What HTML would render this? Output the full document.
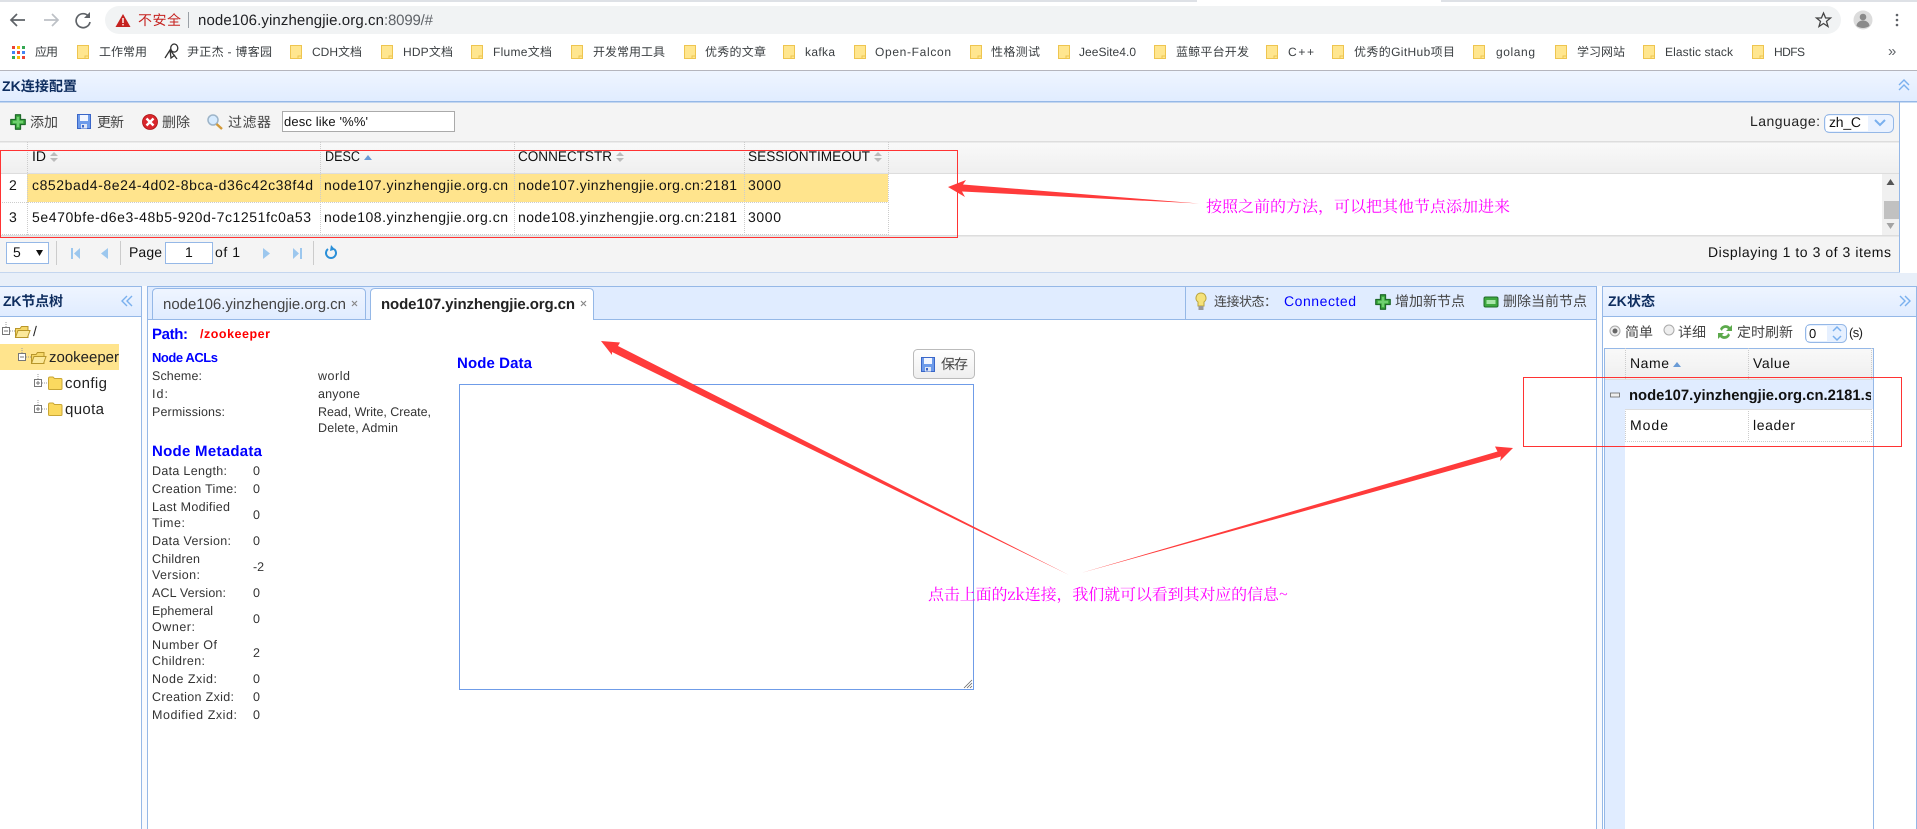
<!DOCTYPE html>
<html lang="zh"><head><meta charset="utf-8"><title>ZK</title>
<style>
html,body{margin:0;padding:0;background:#fff;width:1917px;height:829px;overflow:hidden}
svg{display:block;font-family:"Liberation Sans","Noto Sans CJK SC",sans-serif;font-size:12px}
.b{font-size:12px;fill:#3c4043}
.g{font-size:14px;fill:#111}
.m{font-size:12.5px;fill:#333}
.t{font-size:14px;fill:#444}
.bl{fill:#00f;font-weight:bold}
.ti{font-size:14px;font-weight:bold;fill:#0e2d5f}
.p{font-family:"Noto Serif CJK SC","Liberation Serif",serif;font-size:16px;fill:#f0f}
.c{fill:none;stroke:#7ab0ee;stroke-width:1.4}
</style></head><body>
<svg xmlns="http://www.w3.org/2000/svg" width="1917" height="829" viewBox="0 0 1917 829" text-rendering="geometricPrecision">
<defs>
<linearGradient id="hd" x1="0" y1="0" x2="0" y2="1"><stop offset="0" stop-color="#eff5ff"/><stop offset="1" stop-color="#e0ecff"/></linearGradient>
<linearGradient id="gh" x1="0" y1="0" x2="0" y2="1"><stop offset="0" stop-color="#f9f9f9"/><stop offset="1" stop-color="#efefef"/></linearGradient>
<linearGradient id="tb" x1="0" y1="0" x2="0" y2="1"><stop offset="0" stop-color="#eff5ff"/><stop offset="1" stop-color="#e0ecff"/></linearGradient>
<linearGradient id="sv" x1="0" y1="0" x2="0" y2="1"><stop offset="0" stop-color="#fff"/><stop offset="1" stop-color="#eee"/></linearGradient>
<g id="bm"><path d="M.5 .5H11.5V13.5H.5Z" fill="#ffe68f" stroke="#eec550"/><path d="M8 13.5V11H11.5" fill="none" stroke="#eec550"/></g>
<g id="plus"><path d="M5.5 .8H10.5V5.5H15.2V10.5H10.5V15.2H5.5V10.5H.8V5.5H5.5Z" fill="#3fae3f" stroke="#1f6b2a" stroke-width="1.3" stroke-linejoin="round"/><path d="M6.8 3H9.2V6.8H13V9.2H9.2V13H6.8V9.2H3V6.8H6.8Z" fill="#6fd06f"/></g>
<g id="flop"><rect x=".5" y=".5" width="13" height="14" fill="#6d9bea" stroke="#3a66c8"/><rect x="3" y="1" width="8" height="6" fill="#f2f6ff"/><rect x="4" y="10" width="6" height="4.5" fill="#dfe6f5"/><rect x="5" y="11" width="2" height="2.5" fill="#3a66c8"/></g>
<g id="fc"><path d="M.5 3.5H5L6.500 1.500H13V12.500H.5Z" fill="#f5d768" stroke="#b8962a"/><path d="M.5 12.500L3 5.500H15L12.500 12.500Z" fill="#fbe89a" stroke="#b8962a"/></g>
<g id="fo"><path d="M.5 2.500Q.5 1 2 1H5L6.500 2.500H13Q14 2.500 14 4V12.500Q14 13.500 13 13.500H1.500Q.5 13.500 .5 12.500Z" fill="#fbd95f" stroke="#c9a635"/></g>
<g id="sa"><path d="M0 4L4 0L8 4Z" fill="#bbb"/><path d="M0 6L4 10L8 6Z" fill="#bbb"/></g>
</defs>

<!-- browser chrome -->
<rect width="1917" height="2" fill="#dee1e6"/><rect x="1197" width="244" height="2" fill="#fff"/>
<rect x="105" y="6" width="1736" height="28" rx="14" fill="#f1f3f4"/>
<path d="M25 20H11M17 14L11 20L17 26" fill="none" stroke="#5f6368" stroke-width="1.7"/>
<path d="M44 20H58M52 14L58 20L52 26" fill="none" stroke="#bdc1c6" stroke-width="1.7"/>
<path d="M88.500 16.200A7 7 0 1 0 90 22" fill="none" stroke="#5f6368" stroke-width="1.7"/><path d="M90 12V18H84Z" fill="#5f6368"/>
<path d="M123 14L130.500 27H115.500Z" fill="#c5221f"/><rect x="122.300" y="18" width="1.400" height="5" fill="#fff"/><rect x="122.300" y="24" width="1.400" height="1.400" fill="#fff"/>
<text x="138" y="25" font-size="14" fill="#c5221f" textLength="43">不安全</text>
<rect x="188" y="12" width="1" height="16" fill="#9aa0a6"/>
<text x="198" y="25" font-size="15" fill="#202124" textLength="186">node106.yinzhengjie.org.cn</text>
<text x="384" y="25" font-size="15" fill="#5f6368" textLength="49">:8099/#</text>
<path d="M1823.500 13L1825.600 18H1830.500L1826.500 21.300L1828 26.500L1823.500 23.500L1819 26.500L1820.500 21.300L1816.500 18H1821.400Z" fill="none" stroke="#444" stroke-width="1.300"/>
<circle cx="1863" cy="20" r="9.500" fill="#dcdcdc"/><circle cx="1863" cy="17" r="3.300" fill="#8a8a8a"/><path d="M1856.500 26A6.500 5.500 0 0 1 1869.500 26Q1863 30 1856.500 26Z" fill="#8a8a8a"/>
<circle cx="1897" cy="15" r="1.300" fill="#5f6368"/><circle cx="1897" cy="20" r="1.300" fill="#5f6368"/><circle cx="1897" cy="25" r="1.300" fill="#5f6368"/>

<!-- bookmarks -->
<g>
<rect x="12" y="46" width="3" height="3" fill="#ea4335"/><rect x="17" y="46" width="3" height="3" fill="#fbbc05"/><rect x="22" y="46" width="3" height="3" fill="#34a853"/>
<rect x="12" y="51" width="3" height="3" fill="#4285f4"/><rect x="17" y="51" width="3" height="3" fill="#ea4335"/><rect x="22" y="51" width="3" height="3" fill="#4285f4"/>
<rect x="12" y="56" width="3" height="3" fill="#34a853"/><rect x="17" y="56" width="3" height="3" fill="#fbbc05"/><rect x="22" y="56" width="3" height="3" fill="#ea4335"/>
<path d="M165 58L170 50L171 58L175 55M172 45A3.500 4 0 1 1 171.900 45.100M170 50L177 59" fill="none" stroke="#333" stroke-width="1.300"/>
<use href="#bm" x="77" y="45"/><use href="#bm" x="290" y="45"/><use href="#bm" x="381" y="45"/><use href="#bm" x="471" y="45"/><use href="#bm" x="571" y="45"/><use href="#bm" x="684" y="45"/><use href="#bm" x="783" y="45"/><use href="#bm" x="854" y="45"/><use href="#bm" x="970" y="45"/><use href="#bm" x="1058" y="45"/><use href="#bm" x="1154" y="45"/><use href="#bm" x="1266" y="45"/><use href="#bm" x="1332" y="45"/><use href="#bm" x="1473" y="45"/><use href="#bm" x="1555" y="45"/><use href="#bm" x="1643" y="45"/><use href="#bm" x="1752" y="45"/>
<text class="b" x="35" y="56" textLength="23">应用</text>
<text class="b" x="99" y="56" textLength="48">工作常用</text>
<text class="b" x="187" y="56" textLength="85">尹正杰 - 博客园</text>
<text class="b" x="312" y="56" textLength="50">CDH文档</text>
<text class="b" x="403" y="56" textLength="50">HDP文档</text>
<text class="b" x="493" y="56" textLength="59">Flume文档</text>
<text class="b" x="593" y="56" textLength="72">开发常用工具</text>
<text class="b" x="705" y="56" textLength="61">优秀的文章</text>
<text class="b" x="805" y="56" textLength="30">kafka</text>
<text class="b" x="875" y="56" textLength="76">Open-Falcon</text>
<text class="b" x="991" y="56" textLength="49">性格测试</text>
<text class="b" x="1079" y="56" textLength="57">JeeSite4.0</text>
<text class="b" x="1176" y="56" textLength="73">蓝鲸平台开发</text>
<text class="b" x="1288" y="56" textLength="26">C++</text>
<text class="b" x="1354" y="56" textLength="101">优秀的GitHub项目</text>
<text class="b" x="1496" y="56" textLength="39">golang</text>
<text class="b" x="1577" y="56" textLength="48">学习网站</text>
<text class="b" x="1665" y="56" textLength="68">Elastic stack</text>
<text class="b" x="1774" y="56" textLength="31">HDFS</text>
<text x="1888" y="56" font-size="15" fill="#5f6368">»</text>
</g>
<rect y="70" width="1917" height="1" fill="#b5b5bd"/>

<!-- top panel -->
<rect y="71" width="1917" height="31" fill="url(#hd)"/>
<rect y="101" width="1917" height="1.500" fill="#95b8e7"/>
<text class="ti" x="2" y="91" textLength="75">ZK连接配置</text>
<path d="M1899 85L1904 80L1909 85M1899 90L1904 85L1909 90" class="c"/>
<rect y="102.500" width="1899" height="170" fill="#f4f4f4"/>
<rect x="1899" y="102" width="1" height="172" fill="#95b8e7"/>
<rect y="141" width="1899" height="1.500" fill="#ddd"/>

<use href="#plus" x="10" y="114"/>
<text class="t" x="30" y="127" textLength="28">添加</text>
<use href="#flop" x="77" y="114"/>
<text class="t" x="97" y="127" textLength="27">更新</text>
<circle cx="150" cy="122" r="7.500" fill="#d9262c" stroke="#a11" stroke-width=".8"/><path d="M146.500 118.500L153.500 125.500M153.500 118.500L146.500 125.500" stroke="#fff" stroke-width="2.400"/>
<text class="t" x="162" y="127" textLength="28">删除</text>
<circle cx="213" cy="120" r="5" fill="#d6ebff" stroke="#9db4c8" stroke-width="1.500"/><path d="M216.500 124L222 129" stroke="#d29a3a" stroke-width="2.400"/>
<text class="t" x="228" y="127" textLength="43">过滤器</text>
<rect x="282.500" y="111.500" width="172" height="20" fill="#fff" stroke="#aaa"/>
<text x="284" y="126" font-size="13" fill="#111" textLength="84">desc like '%%'</text>
<text x="1750" y="126" font-size="14" fill="#222" textLength="70">Language:</text>
<rect x="1824.500" y="114.500" width="69" height="18" rx="5" fill="#eaf2ff" stroke="#95b8e7"/><rect x="1826" y="116" width="42" height="15" fill="#fff"/>
<text x="1829" y="127" font-size="14" fill="#111" textLength="32">zh_C</text>
<path d="M1875 120L1880 125L1885 120" fill="none" stroke="#7ab0ee" stroke-width="2"/>

<!-- grid -->
<rect y="142.500" width="1882" height="31" fill="url(#gh)"/>
<rect x="1882" y="142.500" width="17" height="31" fill="url(#gh)"/>
<rect y="173" width="1899" height="1" fill="#ddd"/>
<rect y="174" width="1899" height="61" fill="#fff"/>
<rect x="27" y="174" width="861" height="28" fill="#ffe48d"/>
<rect x="1882" y="174" width="17" height="61" fill="#f0f0f0"/>
<rect x="1884" y="201" width="15" height="18" fill="#c1c1c1"/>
<path d="M1890.500 179L1894.500 185H1886.500Z" fill="#555"/><path d="M1890.500 229L1894.500 223H1886.500Z" fill="#a3a3a3"/>
<rect y="235" width="1899" height="1.500" fill="#ddd"/>
<g stroke="#ccc" stroke-dasharray="1 1" fill="none">
<path d="M27.500 142V235M320.500 142V235M514.500 142V235M744.500 142V235M888.500 142V235M0 202.500H888M0 234.500H888"/>
</g>
<text class="g" x="32" y="161" textLength="14">ID</text><use href="#sa" x="50" y="152"/>
<text class="g" x="325" y="161" textLength="35" lengthAdjust="spacingAndGlyphs">DESC</text><path d="M364 160L368 155L372 160Z" fill="#6a9bd6"/>
<text class="g" x="518" y="161" textLength="94" lengthAdjust="spacingAndGlyphs">CONNECTSTR</text><use href="#sa" x="616" y="152"/>
<text class="g" x="748" y="161" textLength="122" lengthAdjust="spacingAndGlyphs">SESSIONTIMEOUT</text><use href="#sa" x="874" y="152"/>
<text class="g" x="9" y="190">2</text><text class="g" x="9" y="222">3</text>
<text class="g" x="32" y="190" textLength="281">c852bad4-8e24-4d02-8bca-d36c42c38f4d</text>
<text class="g" x="324" y="190" textLength="184">node107.yinzhengjie.org.cn</text>
<text class="g" x="518" y="190" textLength="219">node107.yinzhengjie.org.cn:2181</text>
<text class="g" x="748" y="190" textLength="33">3000</text>
<text class="g" x="32" y="222" textLength="279">5e470bfe-d6e3-48b5-920d-7c1251fc0a53</text>
<text class="g" x="324" y="222" textLength="184">node108.yinzhengjie.org.cn</text>
<text class="g" x="518" y="222" textLength="219">node108.yinzhengjie.org.cn:2181</text>
<text class="g" x="748" y="222" textLength="33">3000</text>

<!-- pager -->
<rect x="6.500" y="242.500" width="42" height="21" fill="#fff" stroke="#95b8e7"/>
<text x="13" y="257" font-size="14" fill="#111">5</text><path d="M36 250H43L39.500 256Z" fill="#111"/>
<g fill="#ccc"><rect x="56" y="241" width="1" height="24"/><rect x="120" y="241" width="1" height="24"/><rect x="313" y="241" width="1" height="24"/></g>
<path d="M71 248V259H73V248ZM80 248L74 253.500L80 259Z" fill="#9cc7ee"/>
<path d="M108 248L101 253.500L108 259Z" fill="#9cc7ee"/>
<text x="129" y="257" font-size="14" fill="#111" textLength="33">Page</text>
<rect x="165.500" y="242.500" width="47" height="21" fill="#fff" stroke="#95b8e7"/>
<text x="185" y="257" font-size="14" fill="#111">1</text>
<text x="215" y="257" font-size="14" fill="#111" textLength="25">of 1</text>
<path d="M263 248L270 253.500L263 259Z" fill="#9cc7ee"/>
<path d="M293 248L299 253.500L293 259ZM300 248V259H302V248Z" fill="#9cc7ee"/>
<path d="M334 249A5 5 0 1 1 328 249" fill="none" stroke="#2a8fd8" stroke-width="2"/><path d="M331 245L335 249.500L330 251Z" fill="#2a8fd8"/>
<text x="1708" y="257" font-size="14" fill="#111" textLength="183">Displaying 1 to 3 of 3 items</text>
<rect y="272" width="1900" height="1" fill="#c4d6ef"/>

<!-- gap -->
<rect y="273" width="1917" height="13" fill="#e8eff9"/>
<rect x="142" y="286" width="5" height="543" fill="#f8fafe"/>
<rect x="1597" y="286" width="5" height="543" fill="#f8fafe"/>

<!-- left panel -->
<rect y="286" width="142" height="30" fill="url(#hd)"/>
<path d="M0 286.500H141.500V829M0 316.500H141" fill="none" stroke="#95b8e7"/>
<text class="ti" x="3" y="306" textLength="60">ZK节点树</text>
<path d="M127 296L122 301L127 306M132 296L127 301L132 306" class="c"/>
<rect y="344" width="119" height="26" fill="#ffe48d"/>
<g stroke="#999" stroke-dasharray="1 1" fill="none"><path d="M6 322V327M10 331H15M22 348V353M26 357H31M38 374V379M42 383H48M38 400V405M42 409H48"/></g>
<g fill="none" stroke="#777">
<rect x="2.500" y="327.500" width="7" height="7" fill="#fff"/><path d="M4 331H8"/>
<rect x="18.500" y="353.500" width="7" height="7" fill="#fff"/><path d="M20 357H24"/>
<rect x="34.500" y="379.500" width="7" height="7" fill="#fff"/><path d="M36 383H40M38 381V385"/>
<rect x="34.500" y="405.500" width="7" height="7" fill="#fff"/><path d="M36 409H40M38 407V411"/>
</g>
<use href="#fc" x="15" y="325"/><use href="#fc" x="31" y="351"/>
<use href="#fo" x="48" y="376"/><use href="#fo" x="48" y="402"/>
<text x="33" y="336" font-size="14" fill="#222">/</text>
<text x="49" y="362" font-size="15" fill="#222" textLength="70">zookeeper</text>
<text x="65" y="388" font-size="15" fill="#222" textLength="42">config</text>
<text x="65" y="414" font-size="15" fill="#222" textLength="39">quota</text>

<!-- center panel -->
<rect x="147" y="286" width="1450" height="34" fill="#e0ecff"/>
<path d="M147.500 829V286.500H1596.500V829M147 319.500H370M594 319.500H1596" fill="none" stroke="#95b8e7"/>
<path d="M152.500 319V293Q152.500 288.500 157 288.500H361Q365.500 288.500 365.500 293V319" fill="url(#tb)" stroke="#95b8e7"/>
<path d="M370.500 320V293Q370.500 288.500 375 288.500H589Q593.500 288.500 593.500 293V320" fill="#fff" stroke="#95b8e7"/>
<rect x="371" y="318" width="222" height="3" fill="#fff"/>
<text x="163" y="309" font-size="15" fill="#444" textLength="183">node106.yinzhengjie.org.cn</text>
<text x="381" y="309" font-size="15" font-weight="bold" fill="#222" textLength="194">node107.yinzhengjie.org.cn</text>
<path d="M352 301L357 306M357 301L352 306M581 301L586 306M586 301L581 306" stroke="#888" stroke-width="1.200"/>
<rect x="1185" y="287" width="1" height="32" fill="#95b8e7"/>
<path d="M1201 293A5 5 0 0 1 1204 302V306H1198V302A5 5 0 0 1 1201 293Z" fill="#f5e27a" stroke="#b9a43c"/><rect x="1198.500" y="306" width="5" height="4" fill="#999"/>
<text class="t" x="1214" y="306" style="font-size:13px" textLength="63">连接状态&#xFF1A;</text>
<text x="1284" y="306" font-size="14" fill="#00f" textLength="72">Connected</text>
<use href="#plus" x="1375" y="294"/>
<text class="t" x="1395" y="306" textLength="70">增加新节点</text>
<rect x="1484" y="297" width="14" height="10" rx="1.500" fill="#3ea83e" stroke="#1f6b2a"/><rect x="1486.500" y="300" width="9" height="4" fill="#a8e6a8"/>
<text class="t" x="1503" y="306" textLength="84">删除当前节点</text>

<text x="152" y="339" font-size="15" class="bl" textLength="36">Path:</text>
<text x="200" y="338" font-size="12.500" font-weight="bold" fill="#f00" textLength="70">/zookeeper</text>
<text x="152" y="362" font-size="13" class="bl" textLength="66">Node ACLs</text>
<text class="m" x="152" y="380" textLength="50">Scheme:</text>
<text class="m" x="152" y="398" textLength="16">Id:</text>
<text class="m" x="152" y="416" textLength="73">Permissions:</text>
<text class="m" x="318" y="380" textLength="32">world</text>
<text class="m" x="318" y="398" textLength="42">anyone</text>
<text class="m" x="318" y="416" textLength="113">Read, Write, Create,</text>
<text class="m" x="318" y="432" textLength="80">Delete, Admin</text>
<text x="152" y="456" font-size="15" class="bl" textLength="110">Node Metadata</text>
<text class="m" x="152" y="475" textLength="75">Data Length:</text>
<text class="m" x="152" y="493" textLength="85">Creation Time:</text>
<text class="m" x="152" y="511" textLength="78">Last Modified</text>
<text class="m" x="152" y="527" textLength="33">Time:</text>
<text class="m" x="152" y="545" textLength="79">Data Version:</text>
<text class="m" x="152" y="563" textLength="48">Children</text>
<text class="m" x="152" y="579" textLength="48">Version:</text>
<text class="m" x="152" y="597" textLength="74">ACL Version:</text>
<text class="m" x="152" y="615" textLength="61">Ephemeral</text>
<text class="m" x="152" y="631" textLength="43">Owner:</text>
<text class="m" x="152" y="649" textLength="65">Number Of</text>
<text class="m" x="152" y="665" textLength="53">Children:</text>
<text class="m" x="152" y="683" textLength="65">Node Zxid:</text>
<text class="m" x="152" y="701" textLength="82">Creation Zxid:</text>
<text class="m" x="152" y="719" textLength="85">Modified Zxid:</text>
<g class="m"><text class="m" x="253" y="475">0</text><text class="m" x="253" y="493">0</text><text class="m" x="253" y="519">0</text><text class="m" x="253" y="545">0</text><text class="m" x="253" y="571">-2</text><text class="m" x="253" y="597">0</text><text class="m" x="253" y="623">0</text><text class="m" x="253" y="657">2</text><text class="m" x="253" y="683">0</text><text class="m" x="253" y="701">0</text><text class="m" x="253" y="719">0</text></g>

<text x="457" y="368" font-size="15" class="bl" textLength="75">Node Data</text>
<rect x="913.500" y="349.500" width="61" height="29" rx="4" fill="url(#sv)" stroke="#bbb"/>
<use href="#flop" x="921" y="357"/>
<text class="t" x="941" y="369" textLength="27">保存</text>
<rect x="459.500" y="384.500" width="514" height="305" fill="#fff" stroke="#6f9ce8"/>
<path d="M964 688L972 680M967 688L972 683M970 688L972 686" stroke="#666" stroke-width=".8"/>

<!-- right panel -->
<rect x="1602" y="286" width="315" height="30" fill="url(#hd)"/>
<path d="M1602.500 829V286.500H1917M1602 316.500H1917M1916.500 286V829" fill="none" stroke="#95b8e7"/>
<text class="ti" x="1608" y="306" textLength="47">ZK状态</text>
<path d="M1900 296L1905 301L1900 306M1905 296L1910 301L1905 306" class="c"/>
<circle cx="1615" cy="331" r="5" fill="#eee" stroke="#aaa"/><circle cx="1615" cy="331" r="2.500" fill="#666"/>
<text class="t" x="1625" y="337" textLength="28">简单</text>
<circle cx="1669" cy="330" r="5" fill="#eee" stroke="#aaa"/>
<text class="t" x="1678" y="337" textLength="28">详细</text>
<path d="M1720 329A6 6 0 0 1 1730 327L1732 325V331H1726L1728 329A3.500 3.500 0 0 0 1722 331ZM1730 335A6 6 0 0 1 1720 337L1718 339V333H1724L1722 335A3.500 3.500 0 0 0 1728 333Z" fill="#5caa4c"/>
<text class="t" x="1737" y="337" textLength="56">定时刷新</text>
<rect x="1805.500" y="324.500" width="41" height="18" rx="5" fill="#e6f0ff" stroke="#95b8e7"/><rect x="1807" y="326" width="20" height="15" fill="#fff"/>
<text x="1809" y="338" font-size="13" fill="#111">0</text>
<path d="M1833 331L1837 327L1841 331M1833 336L1837 340L1841 336" fill="none" stroke="#7ab0ee" stroke-width="1.500"/>
<text x="1849" y="337" font-size="13" fill="#222" textLength="14">(s)</text>

<rect x="1605" y="348" width="268" height="32" fill="url(#gh)"/>
<rect x="1605" y="380" width="268" height="29" fill="#e0ecff"/>
<rect x="1605" y="409" width="20" height="420" fill="#e0ecff"/>
<path d="M1604.500 829V348.500H1873.500V829" fill="none" stroke="#95b8e7"/>
<rect x="1605" y="379" width="268" height="1" fill="#ddd"/>
<g stroke="#ccc" stroke-dasharray="1 1" fill="none"><path d="M1625.500 348V380M1748.500 348V380M1871.500 348V380M1625.500 409V441M1748.500 409V441M1871.500 409V441M1625 441.500H1872"/></g>
<path d="M1625 409.500H1872" stroke="#ddd"/>
<text class="g" x="1630" y="368" textLength="39">Name</text><path d="M1673 367L1677 362L1681 367Z" fill="#6a9bd6"/>
<text class="g" x="1753" y="368" textLength="37">Value</text>
<rect x="1610.500" y="393" width="9" height="4" fill="#eee" stroke="#666" stroke-width=".8"/>
<svg x="1625" y="380" width="246" height="29"><text x="4" y="20" font-size="15" font-weight="bold" fill="#111" textLength="244" lengthAdjust="spacingAndGlyphs">node107.yinzhengjie.org.cn.2181.s</text></svg>
<text class="g" x="1630" y="430" textLength="38">Mode</text>
<text class="g" x="1753" y="430" textLength="42">leader</text>

<!-- annotations -->
<rect x=".5" y="150.500" width="957" height="87" fill="none" stroke="#ff3333"/>
<rect x="1523.500" y="377.500" width="378" height="69" fill="none" stroke="#ff3333"/>
<g fill="#ff3b3b">
<path d="M948 187L966 180L963 184.500L1199 203.500L962 191.500L965 197Z"/>
<path d="M601 341L620 342.500L618 346L1069 575L612 352L612 355Z"/>
<path d="M1513 448L1495 446.500L1497.500 451.500L1081 573L1501 456.500L1500 461Z"/>
</g>
<text class="p" x="1206" y="212" textLength="304">按照之前的方法&#xFF0C;可以把其他节点添加进来</text>
<text class="p" x="928" y="600" textLength="360">点击上面的zk连接&#xFF0C;我们就可以看到其对应的信息~</text>
</svg>
</body></html>
